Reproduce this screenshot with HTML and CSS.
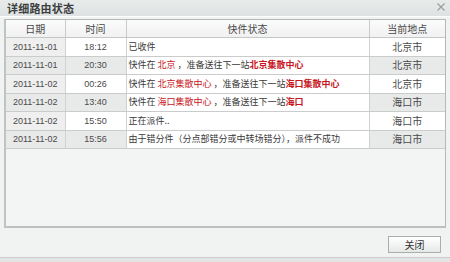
FILE: index.html
```html
<!DOCTYPE html>
<html lang="zh-CN">
<head>
<meta charset="utf-8">
<title>详细路由状态</title>
<link rel="stylesheet" href="styles.css">
</head>
<body>
<div class="dialog">
  <div class="titlebar">
    <span class="title">详细路由状态</span>
    <span class="close">
      <svg width="8" height="8" viewBox="0 0 8 8"><path d="M0.5 0.5 L7.5 7.5 M7.5 0.5 L0.5 7.5" stroke="#9a9d9d" stroke-width="1.1" fill="none"/></svg>
    </span>
  </div>
  <div class="content">
    <div class="tablebox">
      <table class="route">
        <colgroup>
          <col class="c-date"><col class="c-time"><col class="c-status"><col class="c-loc">
        </colgroup>
        <thead>
          <tr><th>日期</th><th>时间</th><th>快件状态</th><th>当前地点</th></tr>
        </thead>
        <tbody>
          <tr class="odd"><td class="num">2011-11-01</td><td class="num">18:12</td><td class="status">已收件</td><td class="loc">北京市</td></tr>
          <tr class="even"><td class="num">2011-11-01</td><td class="num">20:30</td><td class="status">快件在 <span class="red">北京</span> ，准备送往下一站<span class="red b">北京集散中心</span></td><td class="loc">北京市</td></tr>
          <tr class="odd"><td class="num">2011-11-02</td><td class="num">00:26</td><td class="status">快件在 <span class="red">北京集散中心</span> ，准备送往下一站<span class="red b">海口集散中心</span></td><td class="loc">北京市</td></tr>
          <tr class="even"><td class="num">2011-11-02</td><td class="num">13:40</td><td class="status">快件在 <span class="red">海口集散中心</span> ，准备送往下一站<span class="red b">海口</span></td><td class="loc">海口市</td></tr>
          <tr class="odd"><td class="num">2011-11-02</td><td class="num">15:50</td><td class="status">正在派件..</td><td class="loc">海口市</td></tr>
          <tr class="even"><td class="num">2011-11-02</td><td class="num">15:56</td><td class="status">由于错分件（分点部错分或中转场错分），派件不成功</td><td class="loc">海口市</td></tr>
        </tbody>
      </table>
    </div>
  </div>
  <div class="footer">
    <button class="btn" type="button">关闭</button>
  </div>
  <div class="bottomstrip"></div>
</div>
</body>
</html>
```
FILE: styles.css
```css
html, body {
  margin: 0;
  padding: 0;
  background: #f1f3f2;
}
.dialog {
  width: 450px;
  height: 262px;
  display: flex;
  flex-direction: column;
  background: #f1f3f2;
  font-family: "Noto Sans CJK SC", "Liberation Sans", sans-serif;
  color: #333;
  overflow: hidden;
}
.titlebar {
  height: 16px;
  flex: 0 0 16px;
  display: flex;
  align-items: center;
  justify-content: space-between;
  padding: 0 5px 0 7px;
  background: linear-gradient(#e9ebeb, #dfe2e2);
  border-bottom: 1px solid #fbfcfc;
}
.title {
  font-size: 11px;
  font-weight: 700;
  color: #3c3f3f;
  line-height: 16px;
  letter-spacing: 0.2px;
}
.close {
  display: flex;
  align-items: center;
  margin-top: -2px;
}
.content {
  flex: 0 0 auto;
  padding: 2px 4px 0 4px;
}
.tablebox {
  height: 206px;
  border: 1px solid #b4b8b7;
  border-bottom: 2px solid #bcc0bf;
  border-left: 2px solid #bfc3c2;
  background: #f3f5f4;
}
.route {
  width: 100%;
  border-collapse: collapse;
  table-layout: fixed;
  font-size: 9px;
}
.c-date { width: 59px; }
.c-time { width: 61px; }
.c-status { width: 243px; }
.c-loc { width: auto; }
.route th {
  height: 17px;
  padding: 0;
  font-weight: 400;
  font-size: 10px;
  color: #4a4a4a;
  text-align: center;
  background: linear-gradient(#fbfbfb, #f1f1f1);
  border-right: 1px solid #c9cccb;
  border-bottom: 1px solid #c4c7c6;
  line-height: 16px;
}
.route th:last-child { border-right: none; }
.route td {
  height: 17.5px;
  padding: 0;
  border-right: 1px solid #cfd2d1;
  border-bottom: 1px solid #c9cccb;
  text-align: center;
  line-height: 16px;
  white-space: nowrap;
  overflow: hidden;
  background: #ffffff;
}
.route td:last-child { border-right: none; }
.route td.num {
  font-family: "Liberation Sans", "DejaVu Sans", sans-serif;
  font-size: 9px;
  color: #4a4a4a;
}
.route td.status {
  text-align: left;
  padding-left: 2px;
  font-size: 9px;
  color: #3a3a3a;
  background: #ffffff;
}
.route td.loc {
  font-size: 10px;
  color: #4a4a4a;
}
.route tr td:first-child { background: #efefef; }
.route tr.even td { background: #e8e9e9; }
.route tr.even td.status { background: #ffffff; }
.red { color: #c8161d; }
.red.b { font-weight: 700; }
.footer {
  flex: 1 1 auto;
  display: flex;
  justify-content: flex-end;
  align-items: flex-start;
  padding: 8px 9px 0 0;
}
.btn {
  width: 53px;
  height: 17px;
  padding: 0;
  margin: 0;
  border: 1px solid #a9adac;
  border-radius: 0;
  background: linear-gradient(#ffffff, #e6e8e8);
  font-family: "Noto Sans CJK SC", sans-serif;
  font-size: 10px;
  color: #333;
  line-height: 14px;
}
.bottomstrip {
  flex: 0 0 4px;
  height: 4px;
  border-top: 1px solid #c9cdcc;
  background: #e2e5e4;
}
```
